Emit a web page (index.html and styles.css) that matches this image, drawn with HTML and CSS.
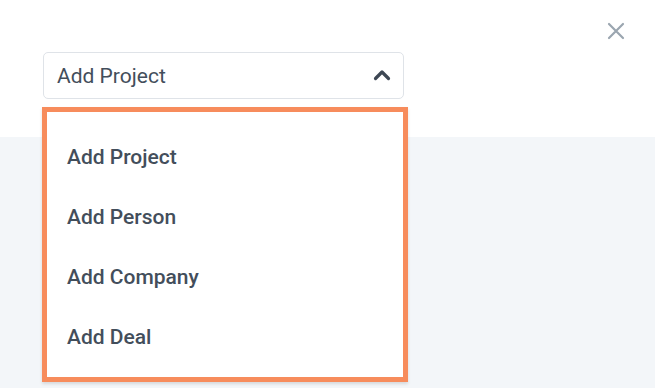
FILE: index.html
```html
<!DOCTYPE html>
<html lang="en">
<head>
    <meta charset="UTF-8">
    <meta name="viewport" content="width=device-width, initial-scale=1.0">
    <title>Add Menu</title>
    <link rel="stylesheet" href="styles.css">
</head>
<body>
    <div class="header">
        <div class="select">
            <span>Add Project</span>
            <svg class="chevron" width="18" height="12" viewBox="0 0 18 12">
                <path d="M2.5 9.5 L9 3 L15.5 9.5" fill="none" stroke="#3d4754" stroke-width="3.2" stroke-linecap="round" stroke-linejoin="round"/>
            </svg>
        </div>
        <button class="close" aria-label="Close">
            <svg width="18" height="18" viewBox="0 0 18 18">
                <path d="M2 2 L16 16 M16 2 L2 16" fill="none" stroke="#9ba6b0" stroke-width="2.2" stroke-linecap="round"/>
            </svg>
        </button>
        <ul class="menu">
            <li>Add Project</li>
            <li>Add Person</li>
            <li>Add Company</li>
            <li>Add Deal</li>
        </ul>
    </div>
    <div class="content"></div>
</body>
</html>
```

FILE: styles.css
```css
body {
    margin: 0;
    font-family: Roboto, "Liberation Sans", sans-serif;
    background-color: #f3f6f9;
    color: #434e5b;
}

.header {
    position: relative;
    height: 137px;
    background: white;
    padding: 52px 0 0 43px;
    box-sizing: border-box;
}

.select {
    width: 361px;
    height: 47px;
    box-sizing: border-box;
    border: 1px solid #dfe3e8;
    border-radius: 5px;
    display: flex;
    align-items: center;
    justify-content: space-between;
    padding: 0 12px 0 13px;
    font-size: 21px;
}

.chevron {
    margin-top: -2px;
}

.close {
    position: absolute;
    top: 21px;
    left: 606px;
    width: 20px;
    height: 20px;
    padding: 0;
    border: none;
    background: none;
    display: flex;
    align-items: center;
    justify-content: center;
}

.menu {
    position: absolute;
    top: 107px;
    left: 42px;
    width: 366px;
    margin: 0;
    padding: 15px 0 10px;
    list-style: none;
    box-sizing: border-box;
    background: white;
    border: 5px solid #f78c5c;
    box-shadow: 0 2px 3px rgba(0, 0, 0, 0.12);
}

.menu li {
    height: 60px;
    display: flex;
    align-items: center;
    padding-left: 20px;
    font-size: 21px;
    font-weight: 500;
}

.content {
    height: 251px;
}
```
